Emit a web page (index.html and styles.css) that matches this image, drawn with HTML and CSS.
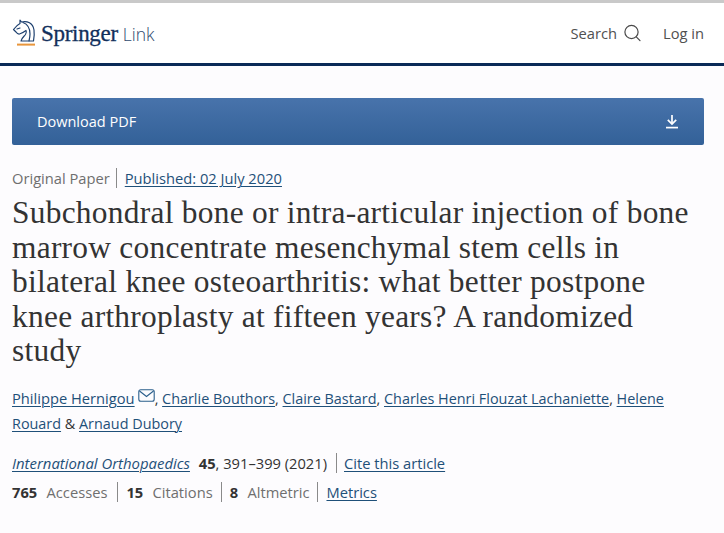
FILE: index.html
```html
<!DOCTYPE html>
<html lang="en">
<head>
<meta charset="utf-8">
<title>Springer Link</title>
<link rel="stylesheet" href="styles.css">
</head>
<body>
<div class="topstrip"></div>
<header class="header">
  <a class="logo" href="#">
    <svg class="horse" width="26" height="32" viewBox="0 0 26 32" fill="none" stroke="#1c3f6e" stroke-width="1.2" stroke-linejoin="round" stroke-linecap="round">
      <path d="M8 3 L9.5 5 C15 3.5 21 6 22 13 C22.6 17 22 21 21.5 24 L9 24 C9.5 21 12 19.5 13.5 17.5 C14.5 16 14.5 14.5 14 13.5 C12 15 9 16.5 7.5 17 C6 17.2 5 16.5 4 15 L1.5 12.5 C3 10.5 6 7.5 8 6.5 Z"/>
      <path d="M11 5.5 C15 7 18 11 18 17 C18 20 17.5 22 17 24"/>
      <path d="M5 12 L8 11"/>
      <rect x="5" y="26.6" width="18" height="2" fill="#e8963c" stroke="none"/>
    </svg>
    <span class="logo-springer">Springer</span><span class="logo-link">Link</span>
  </a>
  <nav class="nav">
    <a class="nav-item" href="#">Search
      <svg width="19" height="19" viewBox="0 0 19 19" fill="none" stroke="#4a4a4a" stroke-width="1.2" stroke-linecap="round"><circle cx="8.5" cy="8" r="6.6"/><path d="M13.3 12.8 L17 16.6"/></svg>
    </a>
    <a class="nav-item" href="#">Log in</a>
  </nav>
</header>
<main class="main">
  <a class="download" href="#">
    <span class="download-label">Download PDF</span>
    <svg width="14" height="15" viewBox="0 0 14 15" fill="none" stroke="#fff" stroke-width="1.7"><path d="M7 1 V9.5"/><path d="M2.8 5.8 L7 10 L11.2 5.8"/><path d="M1 13.6 H13"/></svg>
  </a>
  <div class="meta-top">
    <span class="muted">Original Paper</span>
    <a class="lnk" href="#">Published: 02 July 2020</a>
  </div>
  <h1 class="title">Subchondral bone or intra-articular injection of bone marrow concentrate mesenchymal stem cells in bilateral knee osteoarthritis: what better postpone knee arthroplasty at fifteen years? A randomized study</h1>
  <p class="authors"><a class="lnk first-author" href="#">Philippe Hernigou</a><svg class="mail" width="17" height="13" viewBox="0 0 17 13" fill="none" stroke="#2b5f8c" stroke-width="1.1"><rect x="0.8" y="0.8" width="15.4" height="11.4" rx="2"/><path d="M1.5 2 L8.5 7.5 L15.5 2"/></svg>, <a class="lnk" href="#">Charlie Bouthors</a>, <a class="lnk" href="#">Claire Bastard</a>, <a class="lnk" href="#">Charles Henri Flouzat Lachaniette</a>, <a class="lnk" href="#">Helene Rouard</a> &amp; <a class="lnk" href="#">Arnaud Dubory</a></p>
  <div class="journal">
    <span><a class="lnk italic" href="#">International Orthopaedics</a> <b class="vol">45</b>, 391–399 (2021)</span>
    <span class="sep"><a class="lnk" href="#">Cite this article</a></span>
  </div>
  <ul class="metrics">
    <li><b>765</b> <span class="muted">Accesses</span></li>
    <li><b>15</b> <span class="muted">Citations</span></li>
    <li><b>8</b> <span class="muted">Altmetric</span></li>
    <li><a class="lnk" href="#">Metrics</a></li>
  </ul>
</main>
</body>
</html>
```
FILE: styles.css
```css
* { box-sizing: border-box; }
html, body { margin: 0; padding: 0; }
body {
  width: 724px;
  height: 533px;
  overflow: hidden;
  background: #fdfcfe;
  color: #333;
  font-family: "Open Sans", "Noto Sans", sans-serif;
  font-size: 14.7px;
}
a { text-decoration: none; color: inherit; }
.topstrip { height: 3px; background: #c9c9c9; }
.header {
  height: 63px;
  background: #fff;
  border-bottom: 3px solid #0a2a57;
  display: flex;
  align-items: center;
  justify-content: space-between;
  padding: 0 20px 0 12px;
}
.logo { display: flex; align-items: center; margin-top: -1px; }
.horse { margin-right: 3px; }
.logo-springer {
  font-family: "Liberation Serif", serif;
  font-size: 23px;
  letter-spacing: -0.3px;
  -webkit-text-stroke: 0.3px #12305c;
  color: #12305c;
  margin-top: 2px;
}
.logo-link {
  font-family: "Open Sans", sans-serif;
  font-size: 17.5px;
  font-weight: 300;
  color: #2f4a6e;
  margin-left: 5px;
  margin-top: 2px;
}
.nav { display: flex; align-items: center; gap: 21px; color: #505050; }
.nav-item { display: flex; align-items: center; gap: 6px; }
.main { padding: 32px 20px 0 12px; }
.download {
  display: flex;
  align-items: center;
  justify-content: space-between;
  height: 47px;
  padding: 0 25px;
  color: #fff;
  font-size: 14.5px;
  border-radius: 2px;
  background: linear-gradient(#4873ab, #336198);
}
.download-label { margin-bottom: 1px; }
.meta-top {
  display: flex;
  align-items: center;
  margin-top: 23px;
  height: 20px;
}
.muted { color: #6f6f6f; }
.meta-top .lnk { margin-left: 6px; padding-left: 9px; position: relative; }
.meta-top .lnk::before {
  content: "";
  position: absolute;
  left: 0; top: 0; bottom: 0;
  border-left: 1px solid #8a8a8a;
}
.lnk {
  color: #1f5079;
  text-decoration: underline;
  text-decoration-thickness: 1px;
  text-underline-offset: 2px;
}
.first-author { font-size: 14.7px; }
.italic { font-style: italic; font-size: 14.9px; }
.title {
  margin: 8px 0 0;
  font-family: "Liberation Serif", serif;
  font-weight: 400;
  font-size: 31.4px;
  line-height: 34.5px;
  color: #333;
  letter-spacing: 0.27px;
}
.authors { margin: 17px 0 0; line-height: 25px; font-size: 14.4px; }
.mail { margin-left: 3px; vertical-align: 2px; }
.journal { display: flex; align-items: center; margin-top: 16px; height: 22px; }
.vol { font-weight: 700; margin-left: 5px; }
.sep { margin-left: 9px; padding-left: 7px; border-left: 1px solid #8a8a8a; }
.metrics { list-style: none; display: flex; margin: 8px 0 0; padding: 0; height: 20px; align-items: center; }
.metrics li { padding: 0 8px; border-left: 1px solid #8a8a8a; }
.metrics li:first-child { padding: 0 10px 0 0; border-left: 0; }
.metrics b { margin-right: 5.5px; }
```
